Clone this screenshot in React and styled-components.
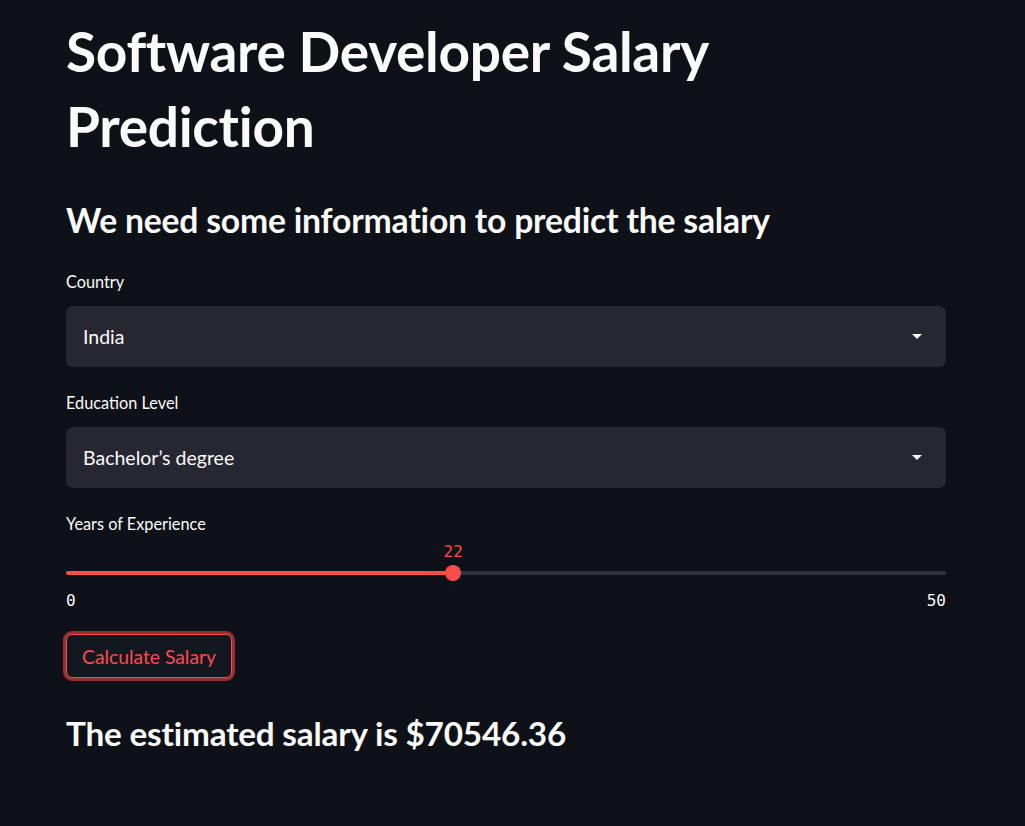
import styled, { createGlobalStyle } from "styled-components";

const GlobalStyle = createGlobalStyle`
	body {
		margin: 0;
		background: #0e1117;
		color: #fafafa;
		font-family: Lato, "Noto Sans", sans-serif;
	}
`;

const Main = styled.main`
	width: 880px;
	padding: 14px 0 60px 66px;
`;

const Title = styled.h1`
	font-size: 55px;
	font-weight: 700;
	line-height: 75px;
	margin: 0 0 34px;
	letter-spacing: -0.3px;
`;

const Heading = styled.h3`
	font-size: ${(p) => p.size}px;
	font-weight: 700;
	line-height: 44px;
	margin: ${(p) => p.margin};
	letter-spacing: -0.2px;
`;

const Field = styled.div`
	margin-bottom: ${(p) => (p.gap === undefined ? 26 : p.gap)}px;
`;

const Label = styled.div`
	font-size: 16.3px;
	line-height: 20px;
	margin-bottom: 14px;
`;

const Select = styled.div`
	height: 61px;
	background: #262730;
	border-radius: 7px;
	display: flex;
	align-items: center;
	justify-content: space-between;
	padding: 0 24px 0 17px;
	font-size: 19.5px;
`;

const Caret = styled.span`
	width: 0;
	height: 0;
	border-left: 5px solid transparent;
	border-right: 5px solid transparent;
	border-top: 5px solid #fafafa;
`;

const Slider = styled.div`
	position: relative;
	height: 64px;
`;

const Track = styled.div`
	position: absolute;
	left: 0;
	right: 0;
	top: 23px;
	height: 4px;
	border-radius: 2px;
	background: #31333f;
`;

const Fill = styled.div`
	height: 100%;
	border-radius: 2px;
	background: #ff4b4b;
`;

const Thumb = styled.div`
	position: absolute;
	top: 17px;
	width: 16px;
	height: 16px;
	margin-left: -8px;
	border-radius: 50%;
	background: #ff4b4b;
`;

const Mono = styled.div`
	font-family: "DejaVu Sans Mono", "Liberation Mono", monospace;
	font-size: 16px;
	line-height: 19px;
`;

const Value = styled(Mono)`
	position: absolute;
	top: -6px;
	transform: translateX(-50%);
	color: #ff4b4b;
`;

const Ticks = styled(Mono)`
	position: absolute;
	left: 0;
	right: 0;
	top: 43px;
	display: flex;
	justify-content: space-between;
	color: #fafafa;
`;

const Button = styled.button`
	display: block;
	margin: 22px 0 0;
	height: 44px;
	padding: 0 15px;
	background: #131720;
	color: #ff4b4b;
	border: 1px solid #ff4b4b;
	border-radius: 6px;
	box-shadow: 0 0 0 3px rgba(255, 75, 75, 0.55);
	font-family: Lato, "Noto Sans", sans-serif;
	font-size: 19.3px;
`;

const App = () => {
	const years = 22;
	const pct = (years / 50) * 100;
	return (
		<>
			<GlobalStyle />
			<Main>
				<Title>Software Developer Salary Prediction</Title>
				<Heading size={33.7} margin="0 0 30px">
					We need some information to predict the salary
				</Heading>
				<Field>
					<Label>Country</Label>
					<Select>
						India
						<Caret />
					</Select>
				</Field>
				<Field>
					<Label>Education Level</Label>
					<Select>
						Bachelor’s degree
						<Caret />
					</Select>
				</Field>
				<Field gap={0}>
					<Label>Years of Experience</Label>
					<Slider>
						<Value style={{ left: `${pct}%` }}>{years}</Value>
						<Track>
							<Fill style={{ width: `${pct}%` }} />
						</Track>
						<Thumb style={{ left: `${pct}%` }} />
						<Ticks>
							<span>0</span>
							<span>50</span>
						</Ticks>
					</Slider>
				</Field>
				<Button>Calculate Salary</Button>
				<Heading size={33.3} margin="33px 0 0">
					The estimated salary is $70546.36
				</Heading>
			</Main>
		</>
	);
};

export default App;
